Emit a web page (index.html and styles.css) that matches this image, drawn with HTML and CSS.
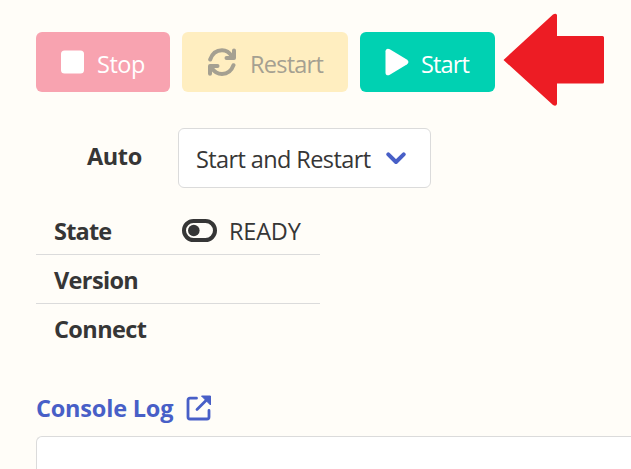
FILE: index.html
```html
<!DOCTYPE html>
<html lang="en">
<head>
<meta charset="utf-8">
<title>Server</title>
<link rel="stylesheet" href="styles.css">
</head>
<body>
<main class="panel">
  <div class="toolbar">
    <button class="button stop" disabled>
      <svg class="icon" viewBox="0 0 24 28"><rect x="1" y="2.500" width="23" height="23" rx="3.500" fill="currentColor"/></svg>
      <span class="t-stop">Stop</span>
    </button>
    <button class="button restart" disabled>
      <svg class="icon sync" viewBox="0 0 28 28"><g fill="none" stroke="currentColor" stroke-width="4" stroke-linecap="round" stroke-linejoin="round"><path d="M2.200 11.500C4.300 5.200 8.700 2.200 14 2.200c4.300 0 7.600 2.300 10 6.300"/><path d="M26 2.500V10h-7.500"/><path d="M25.500 17.200C23.300 23.400 19.200 26 14 26c-4.500 0-7.700-2-10.200-6"/><path d="M2 25.700V18h7.500"/></g></svg>
      <span class="t-restart">Restart</span>
    </button>
    <button class="button start">
      <svg class="icon" viewBox="0 0 24 28"><path d="M0.500 3.300C0.500 0.800 2.800 0 4.800 1.200L21.800 11.600C24 13 24 15 21.800 16.400L4.800 26.800C2.800 28 0.500 27.200 0.500 24.700Z" fill="currentColor"/></svg>
      <span class="t-start">Start</span>
    </button>
    <svg class="arrow" viewBox="0 0 101 94"><path d="M0.500 47 50 1.500Q53 0 54 2V23H99.500Q101 23 101 24.500V69Q101 70.500 99.500 70.500H54V91Q53 94 50 92Z" fill="#ed1c24"/></svg>
  </div>
  <div class="field">
    <label class="label t-auto">Auto</label>
    <div class="select">
      <span class="t-select">Start and Restart</span>
      <svg class="chevron" viewBox="0 0 20 14"><path d="M2.300 2.300 10 10 17.700 2.300" fill="none" stroke="#485fc7" stroke-width="4" stroke-linecap="round" stroke-linejoin="round"/></svg>
    </div>
  </div>
  <dl class="status">
    <div class="row">
      <dt class="t-state">State</dt>
      <dd>
        <svg class="toggle" viewBox="0 0 35 23"><rect x="2" y="2" width="31" height="19" rx="9.500" fill="none" stroke="currentColor" stroke-width="4"/><circle cx="11.800" cy="11.500" r="5.800" fill="currentColor"/></svg>
        <span class="t-ready">READY</span>
      </dd>
    </div>
    <div class="row"><dt class="t-version">Version</dt></div>
    <div class="row"><dt class="t-connect">Connect</dt></div>
  </dl>
  <a class="log-link">
    <span class="t-log">Console Log</span>
    <svg class="external" viewBox="0 0 26 26"><path d="M10.500 3.200H4Q2 3.200 2 5.200V22Q2 24 4 24H21Q23 24 23 22V15.500M11 14.500 22 3.500" fill="none" stroke="currentColor" stroke-width="2.800" stroke-linecap="round"/><path d="M15.500 1H24.500V10Z" fill="currentColor" stroke="currentColor" stroke-linejoin="round"/></svg>
  </a>
  <div class="console"></div>
</main>
</body>
</html>
```
FILE: styles.css
```css
* {
  box-sizing: border-box;
}

body {
  margin: 0;
  background: #fffdf8;
  color: #363636;
  font: 23.5px/36px "Open Sans", "Noto Sans", sans-serif;
  white-space: nowrap;
}

.panel {
  display: flex;
  flex-direction: column;
  height: 469px;
  padding: 32px 0 0 36px;
}

.toolbar {
  display: flex;
  gap: 12px;
  height: 60px;
}

.button {
  display: flex;
  align-items: center;
  height: 60px;
  padding: 4px 0 0 25px;
  border: 0;
  border-radius: 6px;
  color: #fff;
  font: inherit;
}

.stop {
  width: 134px;
  background: #f8a3b0;
}

.restart {
  width: 166px;
  padding-left: 26px;
  background: #ffeec0;
  color: #a5a091;
}

.start {
  width: 135px;
  background: #00d1b2;
}

.icon {
  flex: none;
  width: 24px;
  height: 28px;
  margin: -4px 12px 0 0;
}

.stop .icon {
  margin-left: -1px;
  margin-right: 13px;
}

.sync {
  width: 28px;
  margin-right: 14px;
}

.arrow {
  flex: none;
  width: 101px;
  height: 94px;
  margin: -19px 0 0 -4px;
}

.field {
  display: flex;
  margin-top: 36px;
}

.label {
  width: 142px;
  padding: 10px 0 0 51px;
  font-weight: 700;
}

.select {
  display: flex;
  align-items: center;
  justify-content: space-between;
  width: 253px;
  height: 60px;
  padding: 2px 24px 0 17px;
  border: 1px solid #dbdbdb;
  border-radius: 6px;
  background: #fff;
}

.chevron {
  width: 20px;
  height: 14px;
}

.status {
  width: 284px;
  margin: 18px 0 0;
}

.row {
  display: flex;
  height: 49px;
  padding: 7px 0 0 18px;
  border-bottom: 1px solid #dbdbdb;
}

.row:last-child {
  border-bottom: 0;
}

dt {
  width: 128px;
  font-weight: 700;
}

dd {
  display: flex;
  align-items: center;
  height: 36px;
  margin: 0;
}

.toggle {
  width: 35px;
  height: 23px;
  margin: -1px 12px 0 0;
}

.log-link {
  display: flex;
  align-items: center;
  height: 36px;
  margin-top: 37px;
  color: #485fc7;
  font-weight: 700;
}

.external {
  width: 26px;
  height: 26px;
  margin-top: -1px;
}

.console {
  flex: 1;
  margin-top: 10px;
  border: 1px solid #dbdbdb;
  border-width: 1px 0 0 1px;
  border-radius: 6px 0 0 0;
  background: #fff;
}

.t-stop { letter-spacing: -0.5px; }
.t-restart { letter-spacing: -0.75px; }
.t-start { letter-spacing: -0.85px; }
.t-auto { letter-spacing: -0.4px; }
.t-select { letter-spacing: -0.6px; }
.t-state { letter-spacing: -0.8px; }
.t-ready { letter-spacing: -0.2px; }
.t-version { letter-spacing: -0.65px; }
.t-connect { letter-spacing: -0.6px; }
.t-log { width: 150px; letter-spacing: -0.2px; }
```
